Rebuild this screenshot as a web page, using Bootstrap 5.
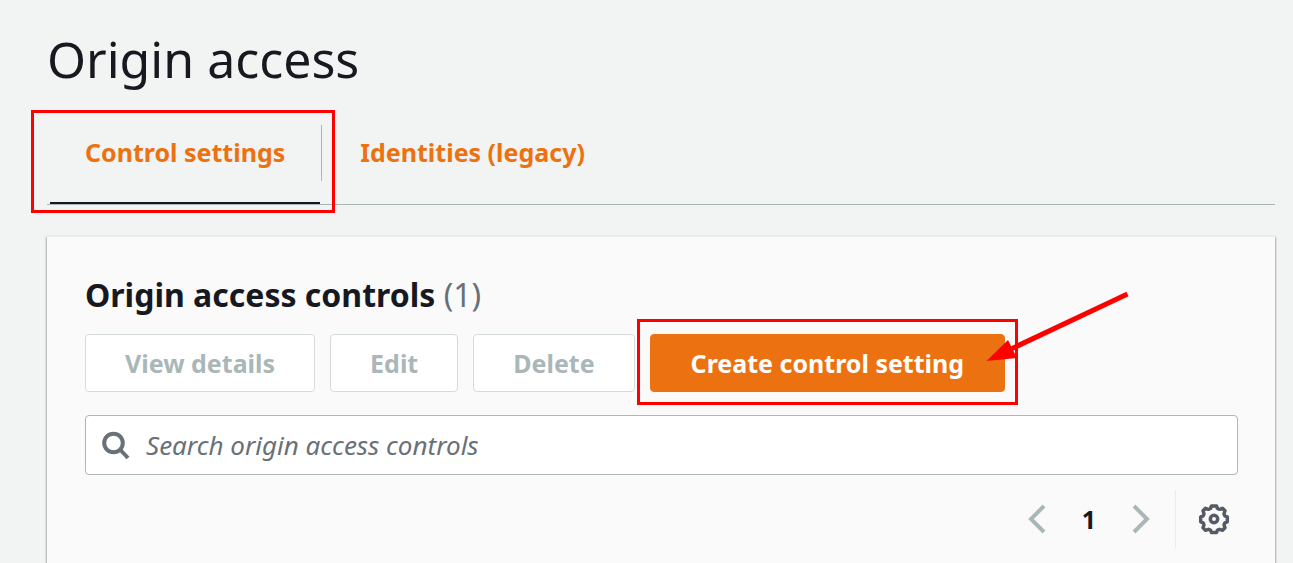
<!DOCTYPE html>
<html lang="en">
<head>
<meta charset="utf-8">
<meta name="viewport" content="width=device-width, initial-scale=1">
<title>Origin access</title>
<link href="https://cdn.jsdelivr.net/npm/bootstrap@5.3.0/dist/css/bootstrap.min.css" rel="stylesheet">
<style>
  body { background: #f2f3f3; color: #16191f; font-family: "Noto Sans", "Open Sans", sans-serif; overflow-x: hidden; }
  .page { padding: 28px 18px 0 47px; }
  .page-title { font-size: 50px; line-height: 62px; font-weight: 400; }
  .tabs { margin-top: 12px; border-bottom: 1px solid #aab7b8; }
  .tabs .nav-item { padding-left: 3px; }
  .tabs .nav-link { height: 102px; padding: 2px 35px 0; font-size: 25px; font-weight: 700; color: #ec7211; border-bottom: 2px solid transparent; border-radius: 0; }
  .tabs .nav-link.active { border-bottom-color: #16191f; }
  .tab-divider { width: 1px; height: 56px; margin-left: 1px; background: #aab7b8; }
  .panel { margin-top: 31px; padding: 36px 37px 15px 38px; background: #fafafa; border-top: 1px solid #eaeded; box-shadow: 0 1px 1px 0 rgba(0,28,36,.3), 1px 1px 2px 0 rgba(0,28,36,.25), -1px 1px 2px 0 rgba(0,28,36,.25); }
  .panel-title { font-size: 32px; line-height: 44px; font-weight: 700; }
  .panel-title span { font-weight: 400; color: #687078; }
  .actions { gap: 15px; margin-top: 17px; }
  .actions .btn { height: 58px; padding: 0 39px; font-size: 25px; font-weight: 700; line-height: 56px; border-radius: 4px; }
  .btn-plain.btn:disabled { background: #fff; border-color: #d5dbdb; color: #aab7b8; opacity: 1; }
  .actions .btn-create { padding: 0 40px; background: #ec7211; border-color: #ec7211; color: #fff; }
  .search { margin-top: 23px; height: 60px; background: #fff; border: 1px solid #aab7b8; border-radius: 4px; padding: 0 15px; gap: 15px; }
  .search .form-control { font-size: 26px; background: transparent; }
  .search .form-control::placeholder { color: #687078; font-style: italic; opacity: 1; }
  .pager { margin-top: 15px; height: 58px; gap: 19px; }
  .pager .btn { width: 40px; height: 40px; border: 0; }
  .pager .btn-page { width: 26px; font-size: 25px; font-weight: 700; color: #16191f; line-height: 38px; }
  .pager .btn-gear { width: 48px; }
  .pager-divider { width: 1px; background: #eaeded; margin: 0 -5px; }
  .callout-box { border: 3px solid #f00; pointer-events: none; }
  .callout-tab { inset: 8px -13px -9px -16px; }
  .callout-create { inset: -15px -13px -13px -13px; }
  .callout-arrow { top: -44px; right: -126px; pointer-events: none; }
</style>
</head>
<body>
<main class="page min-vh-100 d-flex flex-column">
  <h1 class="page-title mb-0">Origin access</h1>
  <ul class="nav tabs">
    <li class="nav-item position-relative d-flex align-items-center">
      <a class="nav-link active d-flex align-items-center" href="#controls" aria-current="page">Control settings</a>
      <span class="tab-divider"></span>
      <span class="callout-box callout-tab position-absolute"></span>
    </li>
    <li class="nav-item">
      <a class="nav-link d-flex align-items-center" href="#identities">Identities (legacy)</a>
    </li>
  </ul>
  <section class="panel flex-grow-1" id="controls">
    <h2 class="panel-title mb-0">Origin access controls <span>(1)</span></h2>
    <div class="actions d-flex flex-wrap">
      <button type="button" class="btn btn-plain" disabled>View details</button>
      <button type="button" class="btn btn-plain" disabled>Edit</button>
      <button type="button" class="btn btn-plain" disabled>Delete</button>
      <div class="position-relative">
        <button type="button" class="btn btn-create">Create control setting</button>
        <span class="callout-box callout-create position-absolute"></span>
        <svg class="callout-arrow position-absolute" width="146" height="80" viewBox="0 0 146 80" aria-hidden="true">
          <path d="M26 59 142.500 4" stroke="#f00" stroke-width="5"/>
          <path d="M1.500 71 23 50 32 68z" fill="#f00"/>
        </svg>
      </div>
    </div>
    <div class="search d-flex align-items-center">
      <svg width="30" height="30" viewBox="0 0 30 30" fill="none" stroke="#687078" stroke-width="4" aria-hidden="true" class="flex-shrink-0"><circle cx="12.500" cy="13" r="9.300"/><path d="m18.500 19 8.500 9"/></svg>
      <input type="search" class="form-control border-0 shadow-none p-0" placeholder="Search origin access controls" aria-label="Search origin access controls">
    </div>
    <div class="pager d-flex justify-content-end align-items-center">
      <button type="button" class="btn p-0 d-flex align-items-center justify-content-center" aria-label="Previous page"><svg width="20" height="30" viewBox="0 0 20 30" fill="none" stroke="#aab7b8" stroke-width="4"><path d="M17 2 4 15l13 13"/></svg></button>
      <button type="button" class="btn btn-page p-0">1</button>
      <button type="button" class="btn p-0 d-flex align-items-center justify-content-center" aria-label="Next page"><svg width="20" height="30" viewBox="0 0 20 30" fill="none" stroke="#aab7b8" stroke-width="4"><path d="m3 2 13 13L3 28"/></svg></button>
      <span class="pager-divider align-self-stretch"></span>
      <button type="button" class="btn btn-gear p-0 d-flex align-items-center justify-content-center" aria-label="Preferences"><svg width="32" height="32" viewBox="0 0 32 32" fill="none" stroke="#545b64" stroke-width="3.500" stroke-linejoin="round"><circle cx="16" cy="16" r="3.700"/><path d="M13.500 3h5l1 2.500 2 .8 3-1 2.500 2.500-1 3 .8 2 2.500 1v5l-2.500 1-.8 2 1 3-2.500 2.500-3-1-2 .8-1 2.400h-5l-1-2.400-2-.8-3 1-2.500-2.500 1-3-.8-2-2.500-1v-5l2.500-1 .8-2-1-3 2.500-2.500 3 1 2-.8z"/></svg></button>
    </div>
  </section>
</main>
<script src="https://cdn.jsdelivr.net/npm/bootstrap@5.3.0/dist/js/bootstrap.bundle.min.js"></script>
</body>
</html>
